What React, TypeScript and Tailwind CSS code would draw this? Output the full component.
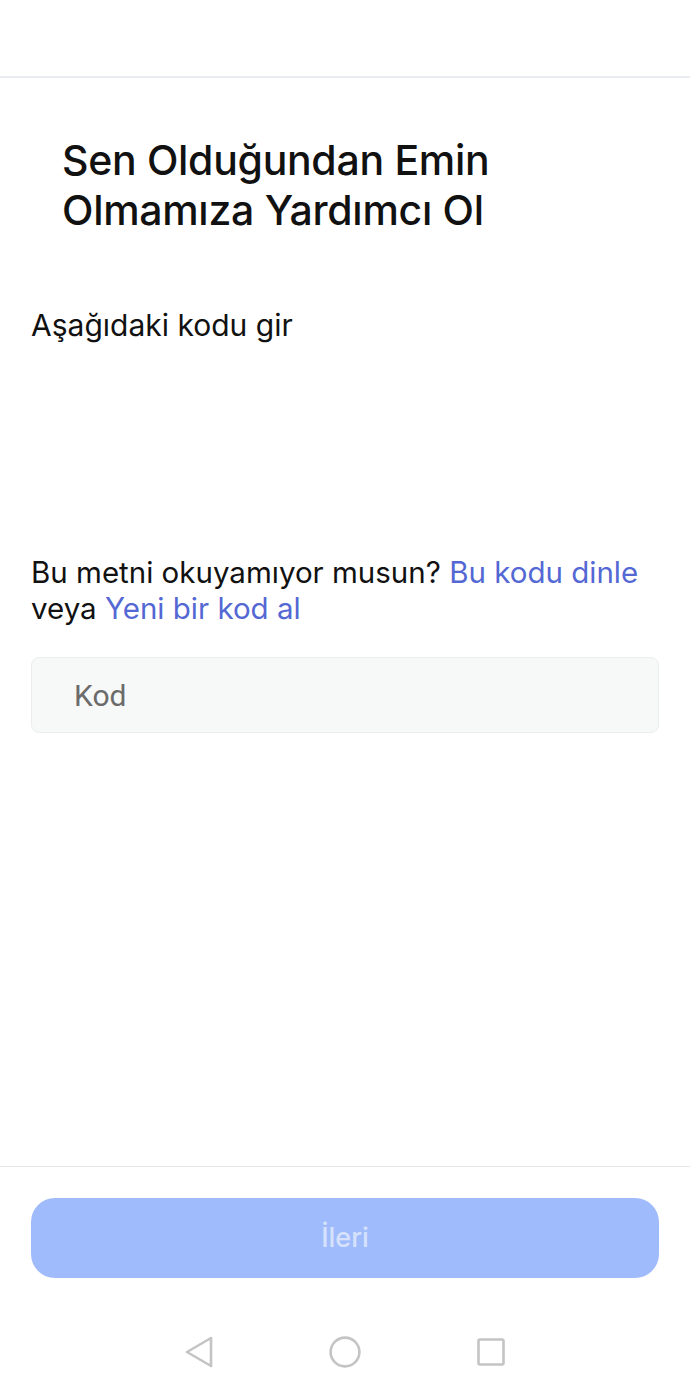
import { useState } from "react";

const inter = "font-['Inter','Noto_Sans',sans-serif]";
const roboto = "font-['Roboto','Noto_Sans',sans-serif]";

function NavBar() {
  return (
    <div className="flex h-[76px] items-center justify-center gap-[116px] pb-[8px]">
      <svg width="28" height="32" viewBox="0 0 28 32" fill="none" stroke="#c4c4c4" strokeWidth="2.6" strokeLinejoin="round">
        <path d="M26 2 L2 16 L26 30 Z" />
      </svg>
      <svg width="32" height="32" viewBox="0 0 32 32" fill="none" stroke="#c4c4c4" strokeWidth="2.6">
        <circle cx="16" cy="16" r="14.4" />
      </svg>
      <svg width="28" height="28" viewBox="0 0 28 28" fill="none" stroke="#c4c4c4" strokeWidth="2.6" strokeLinejoin="round">
        <rect x="1.5" y="1.5" width="25" height="25" rx="1.5" />
      </svg>
    </div>
  );
}

export default function App() {
  const [code, setCode] = useState("");

  return (
    <div className="flex h-[1394px] w-[690px] flex-col bg-white text-[#111111]">
      {/* top bar */}
      <div className="h-[78px] shrink-0 border-b-2 border-[#e8ebef]" />

      <main className="flex flex-1 flex-col px-[31px]">
        <h1 className={`${inter} mt-[57px] pl-[31px] text-[41px] font-medium leading-[50px] tracking-[-0.3px]`}>
          Sen Olduğundan Emin
          <br />
          Olmamıza Yardımcı Ol
        </h1>

        <p className={`${inter} mt-[72px] text-[30px] leading-[36px]`}>Aşağıdaki kodu gir</p>

        <p className={`${inter} mt-[211px] text-[29.5px] leading-[36px]`}>
          Bu metni okuyamıyor musun? <span className="text-[#5468d4]">Bu kodu dinle</span>
          <br />
          veya <span className="text-[#5468d4]">Yeni bir kod al</span>
        </p>

        <input
          value={code}
          onChange={(e) => setCode(e.target.value)}
          placeholder="Kod"
          className={`${roboto} mt-[31px] h-[76px] w-full rounded-[8px] border border-[#eceeee] bg-[#f7f8f8] px-[42px] text-[30px] text-[#111] outline-none placeholder:text-[#6b6b6b]`}
        />
      </main>

      {/* footer */}
      <div className="shrink-0 border-t border-[#e6e6e6] px-[31px] pt-[31px] pb-[40px]">
        <button
          disabled
          className={`${inter} flex h-[80px] w-full items-center justify-center rounded-[24px] bg-[#a0bbfb] text-[27px] font-medium text-[#d6e1fb]`}
        >
          İleri
        </button>
      </div>

      <NavBar />
    </div>
  );
}
